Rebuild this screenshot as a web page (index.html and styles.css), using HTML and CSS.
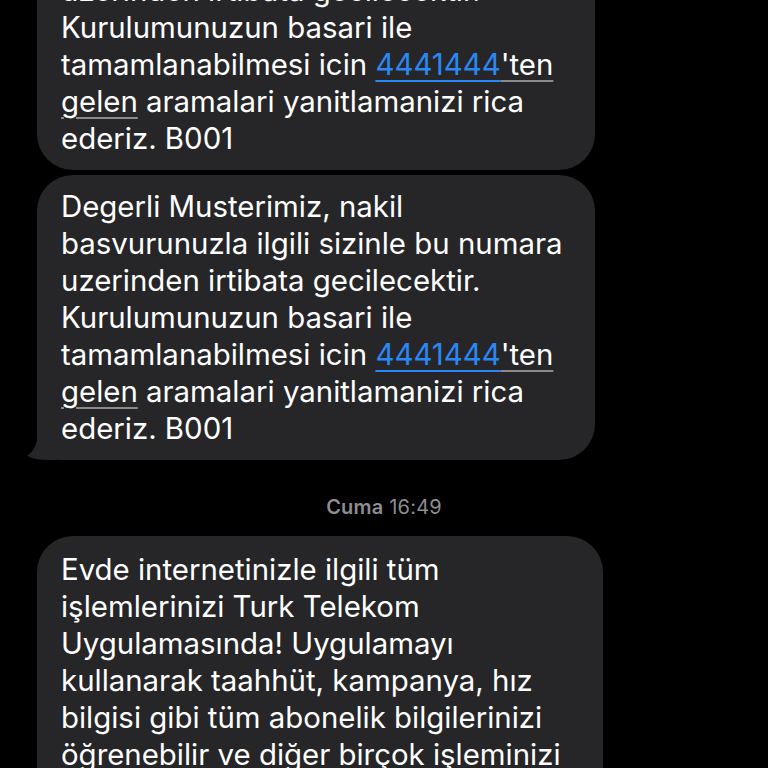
FILE: index.html
```html
<!DOCTYPE html>
<html lang="tr">
<head>
<meta charset="utf-8">
<title>Mesajlar</title>
<link rel="stylesheet" href="styles.css">
</head>
<body>
<main class="thread">
  <div class="bubble">
    <p class="msg">Degerli Musterimiz, nakil<br>basvurunuzla ilgili sizinle bu numara<br>uzerinden irtibata gecilecektir.<br>Kurulumunuzun basari ile<br>tamamlanabilmesi icin <a class="link">4441444</a><span class="detect">'ten</span><br><span class="detect">gelen</span> aramalari yanitlamanizi rica<br>ederiz. B001</p>
  </div>
  <div class="bubble tail">
    <p class="msg">Degerli Musterimiz, nakil<br>basvurunuzla ilgili sizinle bu numara<br>uzerinden irtibata gecilecektir.<br>Kurulumunuzun basari ile<br>tamamlanabilmesi icin <a class="link">4441444</a><span class="detect">'ten</span><br><span class="detect">gelen</span> aramalari yanitlamanizi rica<br>ederiz. B001</p>
    <svg class="tail-shape" width="30" height="26" viewBox="0 0 30 26"><path d="M30 0 L30 26 L22 26 C14 26 6 25 0 22 C6 18 10 11 11 0 Z" fill="#262628"/></svg>
  </div>
  <div class="stamp"><span class="day">Cuma</span> 16:49</div>
  <div class="bubble wide">
    <p class="msg">Evde internetinizle ilgili tüm<br>işlemlerinizi Turk Telekom<br>Uygulamasında! Uygulamayı<br>kullanarak taahhüt, kampanya, hız<br>bilgisi gibi tüm abonelik bilgilerinizi<br>öğrenebilir ve diğer birçok işleminizi<br>kolayca yapabilirsiniz.</p>
  </div>
</main>
</body>
</html>
```
FILE: styles.css
```css
html, body {
  margin: 0;
  padding: 0;
  background: #000;
  overflow: hidden;
}
.thread {
  display: flex;
  flex-direction: column;
  align-items: flex-start;
  gap: 5px;
  margin-top: -115px;
  padding-left: 37px;
  font-family: Inter, "Noto Sans", "DejaVu Sans", sans-serif;
}
.bubble {
  position: relative;
  width: 558px;
  box-sizing: border-box;
  background: #262628;
  border-radius: 36px;
  padding: 13px 20px 13px 24px;
}
.bubble.wide {
  width: 566px;
  padding-top: 15px;
}
.bubble.tail {
  border-bottom-left-radius: 24px;
}
.tail-shape {
  position: absolute;
  left: -10px;
  bottom: 0;
}
.msg {
  position: relative;
  margin: 0;
  color: #fff;
  font-size: 29.4px;
  line-height: 37px;
  letter-spacing: 0;
  white-space: nowrap;
}
.link {
  color: #2a88f5;
  text-decoration: underline;
  text-decoration-thickness: 2px;
  text-underline-offset: 5px;
}
.detect {
  text-decoration: underline;
  text-decoration-color: #8a8a8e;
  text-decoration-thickness: 2px;
  text-underline-offset: 5px;
}
.stamp {
  align-self: center;
  margin: 30px 37px 12px 0;
  color: #8d8d92;
  font-size: 20px;
  line-height: 24px;
  letter-spacing: 0.2px;
}
.day {
  font-weight: 600;
}
```
